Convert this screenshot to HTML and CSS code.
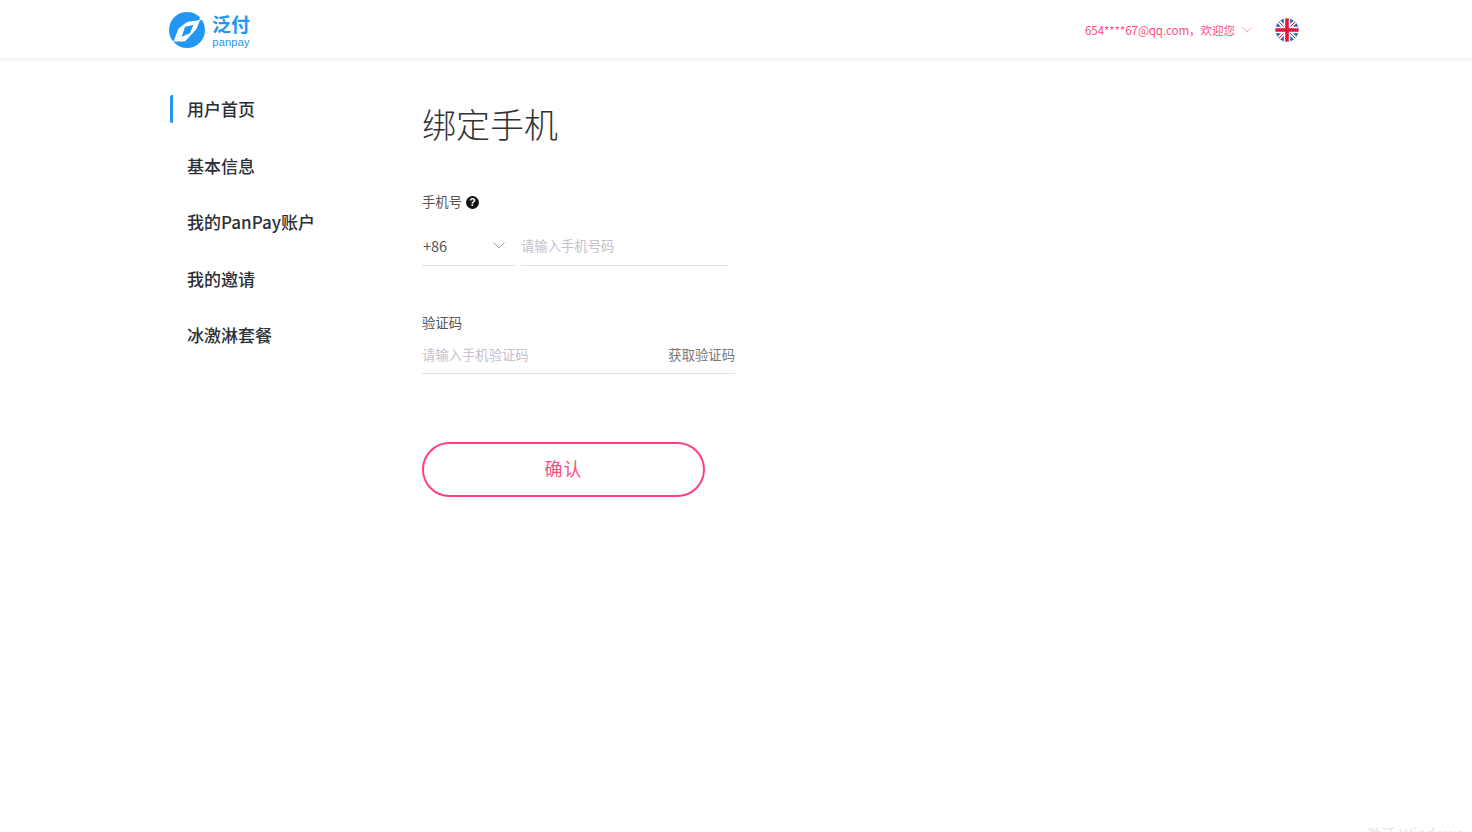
FILE: index.html
```html
<!DOCTYPE html>
<html lang="zh-CN">
<head>
<meta charset="utf-8">
<title>绑定手机</title>
<link rel="stylesheet" href="styles.css">
</head>
<body>
<header class="topbar">
  <div class="topbar-inner">
    <a class="logo">
      <svg class="logo-mark" viewBox="0 0 38 38" width="38" height="38">
        <circle cx="19" cy="19" r="18" fill="#2196f3"/>
        <path d="M19 11 L32 9 L28.500 18 L17 30.500 L5.500 30.500 L10.500 17.500 Z M17 15.700 L25.300 14 L22 22.300 L13.700 25.700 Z" fill="#fff" fill-rule="evenodd"/>
        <path d="M31 10 L33 3 L37 7 Z M6 30 L1 31 L5 36 Z" fill="#fff"/>
      </svg>
      <span class="logo-text"><span class="logo-cn">泛付</span><span class="logo-en">panpay</span></span>
    </a>
    <div class="account">
      <span class="account-name">654****67@qq.com，欢迎您</span>
      <svg class="chev-small" viewBox="0 0 10 6" width="10" height="6"><path d="M.5.5 5 5 9.500.5" fill="none" stroke="#f0a0b8" stroke-width="1"/></svg>
      <svg class="flag" viewBox="0 0 24 24" width="24" height="24">
        <defs><clipPath id="flagclip"><circle cx="12" cy="12" r="11.500"/></clipPath></defs>
        <g clip-path="url(#flagclip)">
          <rect width="24" height="24" fill="#2a5cb0"/>
          <path d="M0 0 24 24 M24 0 0 24" stroke="#fff" stroke-width="4"/>
          <path d="M0 0 24 24 M24 0 0 24" stroke="#e0173d" stroke-width="1"/>
          <path d="M12 0V24 M0 12H24" stroke="#fff" stroke-width="6.500"/>
          <path d="M12 0V24 M0 12H24" stroke="#e0173d" stroke-width="3.600"/>
        </g>
      </svg>
    </div>
  </div>
</header>
<div class="layout">
  <nav class="sidenav">
    <a class="nav-item is-active">用户首页</a>
    <a class="nav-item">基本信息</a>
    <a class="nav-item">我的PanPay账户</a>
    <a class="nav-item">我的邀请</a>
    <a class="nav-item">冰激淋套餐</a>
  </nav>
  <main class="content">
    <h1 class="title">绑定手机</h1>
    <div class="label label-phone">手机号
      <svg class="help" viewBox="0 0 13 13" width="13" height="13"><circle cx="6.500" cy="6.500" r="6.500" fill="#111"/><text x="6.500" y="10" class="help-mark">?</text></svg>
    </div>
    <div class="phone-row">
      <div class="field code-field"><span class="code">+86</span>
        <svg viewBox="0 0 12 7" width="12" height="7"><path d="M.5.500 6 6 11.500.500" fill="none" stroke="#9aa0a8" stroke-width="1"/></svg>
      </div>
      <div class="field phone-field"><span class="placeholder">请输入手机号码</span></div>
    </div>
    <div class="label label-code">验证码</div>
    <div class="field sms-field"><span class="placeholder">请输入手机验证码</span><a class="get-code">获取验证码</a></div>
    <button class="confirm" type="button">确认</button>
  </main>
</div>
<div class="watermark">激活 Windows</div>
</body>
</html>
```
FILE: styles.css
```css
* { box-sizing: border-box; }
html, body { margin: 0; height: 100%; overflow: hidden; }
body {
  position: relative;
  background: #fff;
  font-family: "Noto Sans CJK SC", "Noto Sans", sans-serif;
  color: #333;
}
.topbar {
  height: 58px;
  background: #fff;
  box-shadow: 0 1px 5px rgba(0, 0, 0, .09);
}
.topbar-inner {
  width: 1132px;
  margin-left: 168px;
  height: 100%;
  display: flex;
  align-items: center;
  justify-content: space-between;
  padding-top: 2px;
}
.logo { display: flex; align-items: center; gap: 6px; }
.logo-mark { display: block; }
.logo-text { display: flex; flex-direction: column; align-items: center; color: #2196f3; }
.logo-cn { font-size: 19px; font-weight: 700; height: 24px; line-height: 22px; }
.logo-en { font-family: "Liberation Sans", sans-serif; font-size: 11px; line-height: 11px; letter-spacing: .2px; }
.account { display: flex; align-items: center; }
.account-name { font-size: 11.600px; letter-spacing: -.1px; color: #ff4d7f; }
.chev-small { margin-left: 7px; margin-right: 23px; }
.flag { display: block; margin-right: 1px; }
.layout { display: flex; padding: 37px 0 0 170px; }
.sidenav { width: 252px; display: flex; flex-direction: column; gap: 28.500px; flex: none; }
.nav-item {
  display: block;
  height: 28px;
  line-height: 28px;
  padding-left: 14px;
  font-size: 17px;
  font-weight: 500;
  color: #2b2f36;
  border-left: 3px solid transparent;
  border-radius: 2px;
}
.nav-item.is-active { border-left-color: #2196f3; }
.content { flex: 1; }
.title {
  margin: 4px 0 0;
  font-size: 34px;
  font-weight: 300;
  line-height: 50px;
  color: #333;
}
.label { font-size: 13.330px; line-height: 20px; color: #555; }
.label-phone { display: flex; align-items: center; gap: 4px; margin-top: 43px; }
.help { display: block; }
.help-mark { font-family: "Liberation Sans", sans-serif; font-size: 10.500px; font-weight: 700; fill: #fff; text-anchor: middle; }
.phone-row { display: flex; gap: 5px; margin-top: 14px; }
.field {
  height: 40px;
  border-bottom: 1px solid #dde2f0;
  display: flex;
  align-items: center;
  font-size: 13.330px;
}
.code-field { width: 94px; justify-content: space-between; padding-right: 11px; padding-left: 1px; }
.code { font-size: 14.500px; color: #555; }
.phone-field { width: 207px; }
.placeholder { color: #c4c0cc; }
.label-code { margin-top: 47px; }
.sms-field { width: 313px; height: 39px; margin-top: 2px; justify-content: space-between; }
.get-code { color: #777; }
.confirm {
  display: block;
  width: 283px;
  height: 55px;
  margin-top: 68px;
  background: #fff;
  border: 2px solid #ff4080;
  border-radius: 28px;
  color: #ff4d7f;
  font-family: inherit;
  font-size: 18px;
  letter-spacing: 1px;
  padding: 0 0 3px;
}
.watermark {
  position: absolute;
  left: 1366px;
  top: 822px;
  font-size: 15px;
  line-height: 24px;
  color: #e6e6e6;
  white-space: nowrap;
}
```
